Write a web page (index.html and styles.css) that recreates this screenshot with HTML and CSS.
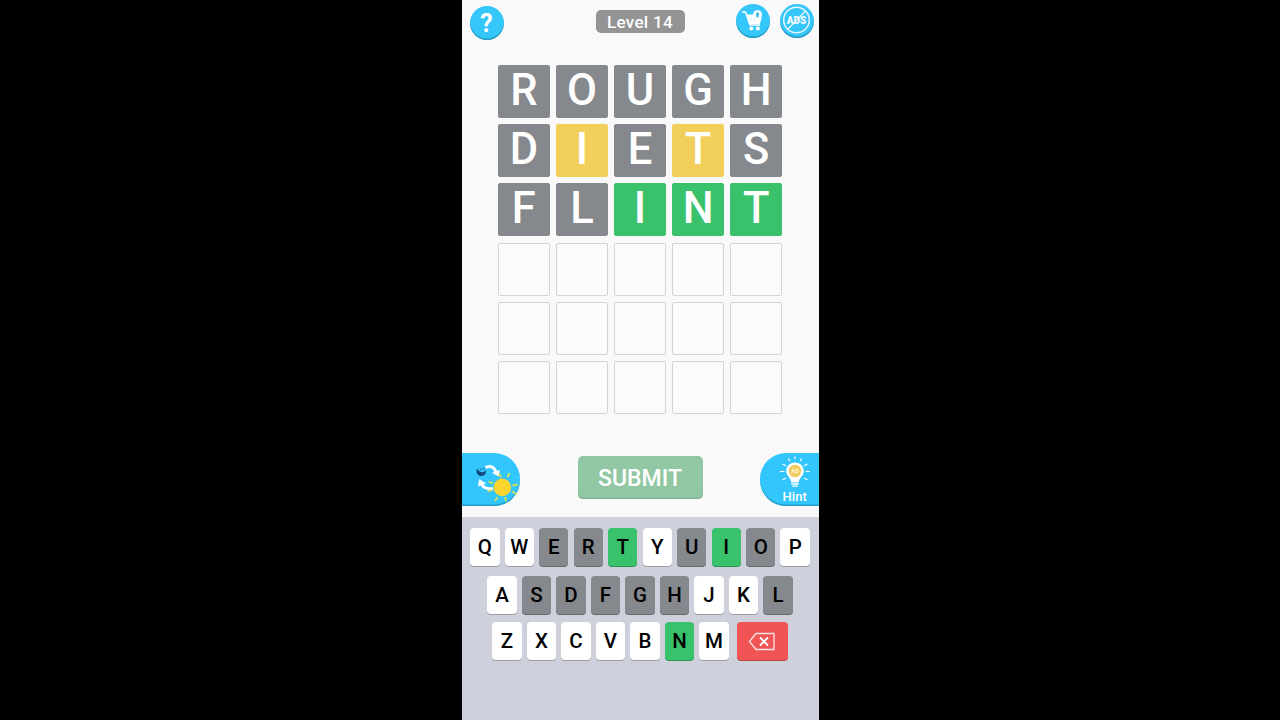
FILE: index.html
```
<!DOCTYPE html>
<html lang="en">
<head>
    <meta charset="UTF-8">
    <title>Level 14</title>
    <link rel="stylesheet" href="styles.css">
</head>
<body>

    <div class="phone">
        <div class="header">
            <button class="round help">?</button>
            <div class="level">Level 14</div>
            <div class="tools">
                <button class="round">
                    <svg width="34" height="34" viewBox="0 0 34 34">
                        <path d="M6 8h3.500l4.500 13h10" fill="none" stroke="#fff" stroke-width="1.500"/>
                        <path d="M10.300 10.500h8l3 3.500h4.500l-2 6H13.500z" fill="#fff"/>
                        <path d="M15 13.500v4M18 13.500v4" stroke="#a5e2f8" stroke-width=".6"/>
                        <circle cx="15.300" cy="24.500" r="2" fill="#fff"/>
                        <circle cx="21.800" cy="24.500" r="2" fill="#fff"/>
                        <circle cx="21.500" cy="10.800" r="4.600" fill="#fff"/>
                        <path d="M21.500 7.800l2.300 2.700h-1v2.800h-2.600v-2.800h-1z" fill="#45b9e0"/>
                    </svg>
                </button>
                <button class="round">
                    <svg width="34" height="34" viewBox="0 0 34 34">
                        <circle cx="16.500" cy="16" r="12.800" fill="none" stroke="#e4f7fd" stroke-width="1.500"/>
                        <path d="M25.500 7L8 25" stroke="#e4f7fd" stroke-width="1.300"/>
                        <text class="ads" x="16.500" y="19.500" text-anchor="middle">ADS</text>
                    </svg>
                </button>
            </div>
        </div>

        <div class="board">
            <div class="tile gray">R</div>
            <div class="tile gray">O</div>
            <div class="tile gray">U</div>
            <div class="tile gray">G</div>
            <div class="tile gray">H</div>

            <div class="tile gray">D</div>
            <div class="tile yellow">I</div>
            <div class="tile gray">E</div>
            <div class="tile yellow">T</div>
            <div class="tile gray">S</div>

            <div class="tile gray">F</div>
            <div class="tile gray">L</div>
            <div class="tile green">I</div>
            <div class="tile green">N</div>
            <div class="tile green">T</div>

            <div class="tile"></div>
            <div class="tile"></div>
            <div class="tile"></div>
            <div class="tile"></div>
            <div class="tile"></div>

            <div class="tile"></div>
            <div class="tile"></div>
            <div class="tile"></div>
            <div class="tile"></div>
            <div class="tile"></div>

            <div class="tile"></div>
            <div class="tile"></div>
            <div class="tile"></div>
            <div class="tile"></div>
            <div class="tile"></div>
        </div>

        <div class="actions">
            <button class="side theme">
                <svg width="58" height="52" viewBox="0 0 58 52">
                    <!-- moon -->
                    <path d="M15.500 15.500a4.700 4.700 0 1 0 8.200 1.500q-1.200 2.600-3.800 2.200q-3.400-.3-4.400-3.700z" fill="#12477f"/>
                    <path d="M18.300 15.800l.8 1.200M21.800 15.200l-.8 1.600" stroke="#12477f" stroke-width="1"/>
                    <!-- arrows -->
                    <path d="M23.500 14.500q7.500-3.500 10.500 4.500" fill="none" stroke="#fff" stroke-width="3"/>
                    <path d="M30 19.800l7.800-2.800-1.300 6.500z" fill="#fff"/>
                    <path d="M31 35.500q-9 1.500-11.500-5" fill="none" stroke="#fff" stroke-width="3"/>
                    <path d="M16 33.500l1.200-7.500 6.800 4.500z" fill="#fff"/>
                    <!-- sun -->
                    <g stroke="#d7df5a" stroke-width="1.800">
                        <path d="M37.500 20.500l1.500 4M47.500 20l-2 4M55.500 31.500l-5 1M54.500 41l-4.500-2.500M44.300 48.500l-1.300-4.500M33 48l2.500-4M25.500 38.500l5-1.500M26.500 28.500l4.500 2"/>
                    </g>
                    <circle cx="40.300" cy="34.400" r="8.800" fill="#fbd52d"/>
                </svg>
            </button>
            <button class="submit">SUBMIT</button>
            <button class="side hint">
                <svg width="34" height="34" viewBox="0 0 34 34">
                    <g stroke="#fff" stroke-width="1.200" stroke-linecap="round">
                        <path d="M17 1.800v2M10.500 3.800l1.200 2M23.500 3.800l-1.200 2M5 9.200l2.500 1.300M29 9.200l-2.500 1.300M2.500 16.500H6M28 16.500h3.500M5 24.500l2.500-1.300M29 24.500l-2.500-1.300"/>
                    </g>
                    <path d="M17 7.500c-5.200 0-8.800 3.700-8.800 8.500 0 4.900 4.700 6.500 5 11.500h7.600c.3-5 5-6.600 5-11.500 0-4.800-3.600-8.500-8.800-8.500z" fill="#fff"/>
                    <path d="M13.300 29h7.400M14.200 31.200h5.600" stroke="#fff" stroke-width="1.300"/>
                    <circle cx="17" cy="16" r="6.200" fill="#f0cc63"/>
                    <text class="ad" x="17" y="18.200" text-anchor="middle">AD</text>
                </svg>
                <span>Hint</span>
            </button>
        </div>

        <div class="keyboard">
            <div class="row">
                <button class="key">Q</button>
                <button class="key">W</button>
                <button class="key gray">E</button>
                <button class="key gray">R</button>
                <button class="key green">T</button>
                <button class="key">Y</button>
                <button class="key gray">U</button>
                <button class="key green">I</button>
                <button class="key gray">O</button>
                <button class="key">P</button>
            </div>
            <div class="row">
                <button class="key">A</button>
                <button class="key gray">S</button>
                <button class="key gray">D</button>
                <button class="key gray">F</button>
                <button class="key gray">G</button>
                <button class="key gray">H</button>
                <button class="key">J</button>
                <button class="key">K</button>
                <button class="key gray">L</button>
            </div>
            <div class="row last">
                <button class="key">Z</button>
                <button class="key">X</button>
                <button class="key">C</button>
                <button class="key">V</button>
                <button class="key">B</button>
                <button class="key green">N</button>
                <button class="key">M</button>
                <button class="key delete">
                    <svg width="28" height="20" viewBox="0 0 28 20">
                        <path d="M1.500 10.500L8 2.500h18v16H8z" fill="none" stroke="#ffe3e3" stroke-width="1.300" stroke-linejoin="round"/>
                        <path d="M12 6.500l8 8M20 6.500l-8 8" stroke="#fff" stroke-width="1.900"/>
                    </svg>
                </button>
            </div>
        </div>
    </div>

</body>
</html>
```
FILE: styles.css
```
* {
    margin: 0;
    padding: 0;
    box-sizing: border-box;
}

body {
    height: 720px;
    background: #000;
    font-family: Roboto, "Liberation Sans", sans-serif;
    font-weight: 500;
    overflow: hidden;
}

button {
    border: none;
    font-family: inherit;
    font-weight: 500;
}

svg {
    display: block;
}

.phone {
    display: flex;
    flex-direction: column;
    width: 357px;
    height: 720px;
    margin: 0 auto;
    background: #f9f9f9;
}

/* top bar */
.header {
    display: grid;
    grid-template-columns: 1fr auto 1fr;
    align-items: start;
    height: 65px;
    padding: 4px 4px 0 8px;
}

.round {
    width: 34px;
    height: 34px;
    border-radius: 50%;
    background: #35c6fa;
    box-shadow: inset 0 -1.5px 0 #2899bf;
    color: #fff;
}

.help {
    margin-top: 2px;
    font-size: 25px;
    font-weight: 700;
    line-height: 33px;
}

.level {
    width: 89px;
    height: 23px;
    margin: 6px 0 0 -4px;
    border-radius: 5px;
    background: #949494;
    color: #fff;
    font-size: 17px;
    line-height: 25px;
    letter-spacing: .3px;
    text-align: center;
}

.tools {
    display: flex;
    justify-content: flex-end;
    gap: 10px;
    margin-right: .5px;
}

.ads {
    fill: #effaff;
    font-size: 10px;
    font-weight: 900;
}

/* guesses */
.board {
    display: grid;
    grid-template-columns: repeat(5, 52.4px);
    grid-auto-rows: 53px;
    gap: 6.2px 5.7px;
    justify-content: center;
    height: 388px;
}

.tile {
    border: 1px solid #d3d4d6;
    border-radius: 2px;
    background: #fbfbfb;
    color: #fff;
    font-size: 43.5px;
    line-height: 49px;
    text-align: center;
}

.gray {
    border-color: #85888c;
    background: #85888c;
}

.yellow {
    border-color: #f1cf5a;
    background: #f1cf5a;
}

.green {
    border-color: #39c16c;
    background: #39c16c;
}

/* theme, submit, hint */
.actions {
    display: flex;
    justify-content: space-between;
    align-items: flex-start;
    height: 63.5px;
}

.side {
    width: 58.5px;
    height: 52.5px;
    background: #33c6fc;
    box-shadow: inset 0 -1.5px 0 #239fca;
    color: #fff;
}

.theme {
    border-radius: 0 26px 26px 0;
}

.hint {
    display: flex;
    flex-direction: column;
    align-items: center;
    padding: 2px 0 0 11px;
    border-radius: 26px 0 0 26px;
    font-size: 13px;
    line-height: 15px;
    letter-spacing: .1px;
}

.ad {
    fill: #fff3cc;
    font-size: 6px;
    font-weight: 700;
}

.submit {
    width: 125px;
    height: 43px;
    margin-top: 3px;
    border-radius: 5px;
    background: #92c7a4;
    box-shadow: inset 0 -1.5px 0 #80b293;
    color: #fff;
    font-size: 23px;
    line-height: 46px;
}

/* keyboard */
.keyboard {
    flex: 1;
    padding-top: 11.5px;
    background: #ced1dc;
}

.row {
    display: flex;
    justify-content: center;
    gap: 5.1px;
    height: 48px;
}

.row.last {
    margin-top: -2px;
}

.key {
    width: 29.4px;
    height: 38px;
    border-radius: 4px;
    background: #fff;
    box-shadow: 0 1px 0 #9b9da3;
    color: #000;
    font-size: 20.5px;
    line-height: 38px;
}

.key.gray {
    background: #85888c;
    box-shadow: 0 1px 0 #66696e;
}

.key.green {
    background: #39c16c;
    box-shadow: 0 1px 0 #2b9352;
}

.key.delete {
    display: flex;
    justify-content: center;
    align-items: center;
    width: 50.5px;
    margin-left: 3.5px;
    background: #f15454;
    box-shadow: 0 1px 0 #bd4444;
}
```
